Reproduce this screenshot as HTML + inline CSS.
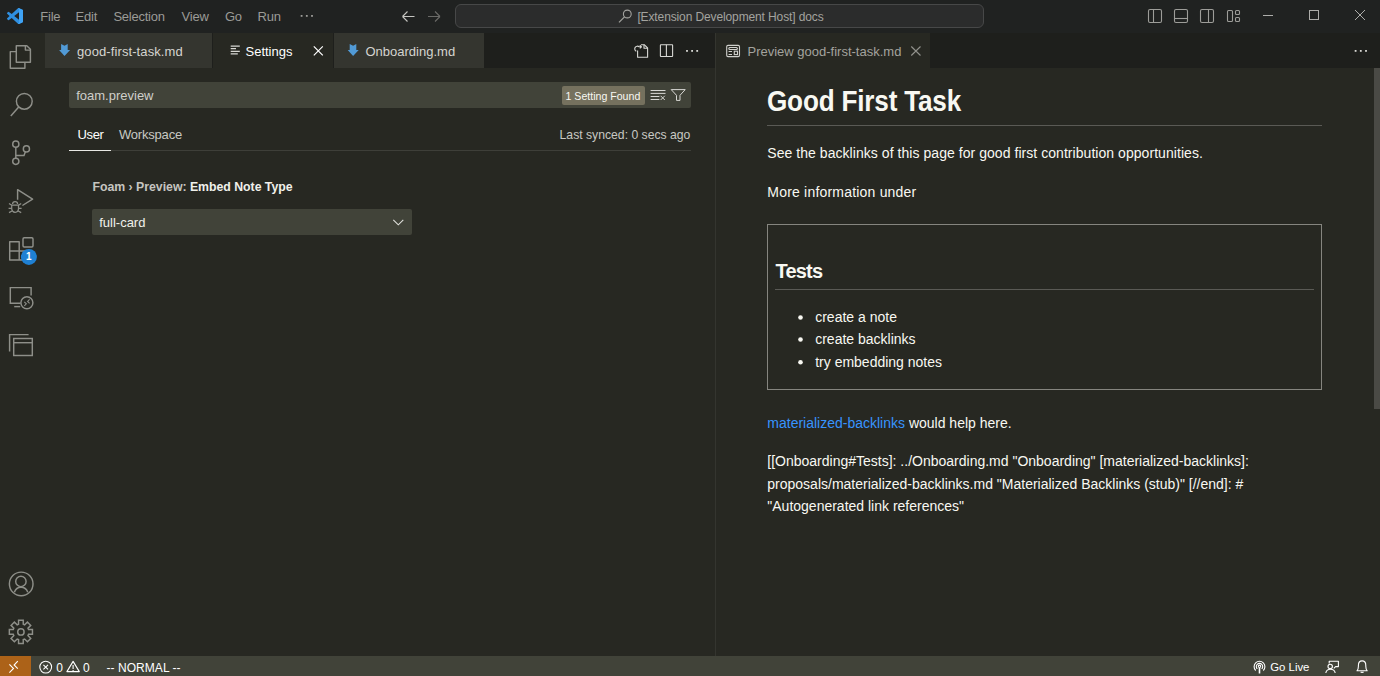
<!DOCTYPE html>
<html><head><meta charset="utf-8">
<style>
html,body{margin:0;padding:0;width:1380px;height:676px;overflow:hidden;background:#272822;}
body{position:relative;font-family:"Liberation Sans", sans-serif;}
.t{position:absolute;white-space:pre;line-height:1;}
.r{position:absolute;}
</style></head><body>
<div class="r" style="left:0px;top:0px;width:1380px;height:33px;background:#202221;"></div>
<div class="r" style="left:0px;top:33px;width:45px;height:623px;background:#272822;"></div>
<div class="r" style="left:45px;top:33px;width:670px;height:35px;background:#1e1f1c;"></div>
<div class="r" style="left:45px;top:68px;width:670px;height:588px;background:#272822;"></div>
<div class="r" style="left:715px;top:33px;width:1px;height:623px;background:#34352f;"></div>
<div class="r" style="left:716px;top:33px;width:664px;height:35px;background:#1e1f1c;"></div>
<div class="r" style="left:716px;top:68px;width:664px;height:588px;background:#272822;"></div>
<div class="r" style="left:0px;top:656px;width:1380px;height:20px;background:#414339;"></div>
<div class="r" style="left:0px;top:656px;width:31px;height:20px;background:#ac6218;"></div>
<div class="t" style="left:40.30px;top:10.00px;font-size:13px;color:#9b9b97;font-weight:400;letter-spacing:-0.25px;">File</div>
<div class="t" style="left:75.60px;top:10.00px;font-size:13px;color:#9b9b97;font-weight:400;letter-spacing:-0.25px;">Edit</div>
<div class="t" style="left:113.40px;top:10.00px;font-size:13px;color:#9b9b97;font-weight:400;letter-spacing:-0.25px;">Selection</div>
<div class="t" style="left:181.60px;top:10.00px;font-size:13px;color:#9b9b97;font-weight:400;letter-spacing:-0.25px;">View</div>
<div class="t" style="left:225.00px;top:10.00px;font-size:13px;color:#9b9b97;font-weight:400;letter-spacing:-0.25px;">Go</div>
<div class="t" style="left:257.60px;top:10.00px;font-size:13px;color:#9b9b97;font-weight:400;letter-spacing:-0.25px;">Run</div>
<div class="r" style="left:455px;top:4px;width:529px;height:24px;background:#2b2c2c;box-sizing:border-box;border:1px solid #474848;border-radius:6px;"></div>
<div class="t" style="left:637.40px;top:10.84px;font-size:12px;color:#a3a39f;font-weight:400;letter-spacing:-0.12px;">[Extension Development Host] docs</div>
<div class="r" style="left:45px;top:33px;width:167px;height:35px;background:#34352f;"></div>
<div class="r" style="left:213px;top:33px;width:120px;height:35px;background:#272822;"></div>
<div class="r" style="left:334px;top:33px;width:150px;height:35px;background:#34352f;"></div>
<div class="t" style="left:77.00px;top:45.30px;font-size:13px;color:#d4d4cf;font-weight:400;letter-spacing:0.1px;">good-first-task.md</div>
<div class="t" style="left:245.50px;top:45.30px;font-size:13px;color:#ffffff;font-weight:400;letter-spacing:0px;">Settings</div>
<div class="t" style="left:365.50px;top:45.30px;font-size:13px;color:#d4d4cf;font-weight:400;letter-spacing:0px;">Onboarding.md</div>
<div class="r" style="left:716px;top:33px;width:214px;height:35px;background:#272822;"></div>
<div class="t" style="left:747.50px;top:45.30px;font-size:13px;color:#a3a39e;font-weight:400;letter-spacing:0px;">Preview good-first-task.md</div>
<div class="r" style="left:69px;top:82px;width:622px;height:26px;background:#414339;border-radius:2px;"></div>
<div class="t" style="left:76.20px;top:88.80px;font-size:13px;color:#cfcfca;font-weight:400;letter-spacing:0px;">foam.preview</div>
<div class="r" style="left:562px;top:86px;width:83px;height:19px;background:#75715e;border-radius:2px;"></div>
<div class="t" style="left:565.50px;top:90.53px;font-size:10.6px;color:#f8f8f2;font-weight:400;letter-spacing:0px;">1 Setting Found</div>
<div class="t" style="left:77.60px;top:127.70px;font-size:13px;color:#ffffff;font-weight:400;letter-spacing:-0.4px;">User</div>
<div class="t" style="left:119.00px;top:127.70px;font-size:13px;color:#c8c8c3;font-weight:400;letter-spacing:-0.2px;">Workspace</div>
<div class="t" style="left:559.60px;top:128.87px;font-size:12.2px;color:#c8c8c3;font-weight:400;letter-spacing:0px;">Last synced: 0 secs ago</div>
<div class="r" style="left:69px;top:150px;width:622px;height:1px;background:#3e3f39;"></div>
<div class="r" style="left:69px;top:150px;width:42px;height:1px;background:#e8e8e4;"></div>
<div class="t" style="left:92.50px;top:181.39px;font-size:12.3px;color:#f0f0eb;font-weight:700;letter-spacing:-0.02px;"><span style="color:#c5c5c0">Foam › Preview: </span>Embed Note Type</div>
<div class="r" style="left:92px;top:209px;width:320px;height:26px;background:#414339;border-radius:2px;"></div>
<div class="t" style="left:99.20px;top:215.70px;font-size:13px;color:#f0f0eb;font-weight:400;letter-spacing:0px;">full-card</div>
<div class="t" style="left:767.00px;top:86.65px;font-size:29px;color:#f8f8f2;font-weight:700;letter-spacing:-0.2px;transform:scaleX(0.9);transform-origin:0 0;">Good First Task</div>
<div class="r" style="left:767px;top:125px;width:555px;height:1px;background:#5a5a55;"></div>
<div class="t" style="left:767.30px;top:146.45px;font-size:14px;color:#f8f8f2;font-weight:400;letter-spacing:0.05px;">See the backlinks of this page for good first contribution opportunities.</div>
<div class="t" style="left:767.30px;top:184.95px;font-size:14px;color:#f8f8f2;font-weight:400;letter-spacing:0.2px;">More information under</div>
<div class="r" style="left:767px;top:224px;width:555px;height:166px;background:transparent;box-sizing:border-box;border:1px solid #85857f;"></div>
<div class="t" style="left:775.50px;top:261.07px;font-size:20px;color:#f8f8f2;font-weight:700;letter-spacing:-0.8px;">Tests</div>
<div class="r" style="left:775px;top:289px;width:539px;height:1px;background:#5a5a55;"></div>
<div class="t" style="left:815.20px;top:309.95px;font-size:14px;color:#f8f8f2;font-weight:400;letter-spacing:0px;">create a note</div>
<div class="t" style="left:815.20px;top:331.95px;font-size:14px;color:#f8f8f2;font-weight:400;letter-spacing:0px;">create backlinks</div>
<div class="t" style="left:815.20px;top:354.65px;font-size:14px;color:#f8f8f2;font-weight:400;letter-spacing:0px;">try embedding notes</div>
<div class="t" style="left:767.30px;top:415.85px;font-size:14px;color:#f8f8f2;font-weight:400;letter-spacing:0px;"><span style="color:#3794ff">materialized-backlinks</span> would help here.</div>
<div class="t" style="left:767.30px;top:453.95px;font-size:14px;color:#f8f8f2;font-weight:400;letter-spacing:0px;">[[Onboarding#Tests]: ../Onboarding.md "Onboarding" [materialized-backlinks]:</div>
<div class="t" style="left:767.30px;top:476.85px;font-size:14px;color:#f8f8f2;font-weight:400;letter-spacing:0px;">proposals/materialized-backlinks.md "Materialized Backlinks (stub)" [//end]: #</div>
<div class="t" style="left:767.30px;top:499.05px;font-size:14px;color:#f8f8f2;font-weight:400;letter-spacing:0px;">"Autogenerated link references"</div>
<div class="r" style="left:1374px;top:68px;width:6px;height:341px;background:#4a4a45;"></div>
<div class="t" style="left:56.20px;top:661.84px;font-size:12px;color:#ffffff;font-weight:400;letter-spacing:0px;">0</div>
<div class="t" style="left:82.90px;top:661.84px;font-size:12px;color:#ffffff;font-weight:400;letter-spacing:0px;">0</div>
<div class="t" style="left:106.50px;top:661.64px;font-size:12px;color:#ffffff;font-weight:400;letter-spacing:0.05px;">-- NORMAL --</div>
<div class="t" style="left:1270.20px;top:662.15px;font-size:11.4px;color:#ffffff;font-weight:400;letter-spacing:0px;">Go Live</div>
<svg class="r" style="left:0;top:0" width="1380" height="676" viewBox="0 0 1380 676" fill="none">
<path fill="#2f8fe0" transform="translate(7 8) scale(0.16)" d="M96.46 10.8L75.86.87a6.23 6.23 0 0 0-7.1 1.2L29.33 38.05 12.15 25a4.16 4.16 0 0 0-5.32.24L1.33 30.25a4.17 4.17 0 0 0 0 6.16L16.23 50 1.33 63.59a4.17 4.17 0 0 0 0 6.16l5.5 5a4.16 4.16 0 0 0 5.32.24l17.18-13.04 39.43 35.96a6.22 6.22 0 0 0 7.1 1.2l20.6-9.92A6.25 6.25 0 0 0 100 83.6V16.4a6.25 6.25 0 0 0-3.54-5.6zM75.01 72.7L45.1 50l29.91-22.7z"/>
<path fill="#3fa3f5" transform="translate(7 8) scale(0.16)" d="M75.86.87a6.23 6.23 0 0 0-7.1 1.2L75.01 6V94l-6.25 4.7a6.22 6.22 0 0 0 7.1 1.2l20.6-9.92A6.25 6.25 0 0 0 100 83.6V16.4a6.25 6.25 0 0 0-3.54-5.6z"/>
<rect x="300.7" y="15" width="1.8" height="1.8" fill="#9b9b97"/>
<rect x="305.9" y="15" width="1.8" height="1.8" fill="#9b9b97"/>
<rect x="311.1" y="15" width="1.8" height="1.8" fill="#9b9b97"/>
<path d="M402.5 16.5H414.5M402.5 16.5L407.5 11.5M402.5 16.5L407.5 21.5" stroke="#c5c5c1" stroke-width="1.1"/>
<path d="M440 16.5H428M440 16.5L435 11.5M440 16.5L435 21.5" stroke="#6a6a67" stroke-width="1.1"/>
<circle cx="627.3" cy="14" r="3.9" stroke="#a3a39f" stroke-width="1.1"/><path d="M624.5 16.8L619 22.3" stroke="#a3a39f" stroke-width="1.2"/>
<rect x="1148.5" y="9.5" width="13" height="13" rx="1.5" stroke="#9d9d99" stroke-width="1.1"/><path d="M1153.5 9.5V22.5" stroke="#9d9d99" stroke-width="1.1"/>
<rect x="1174.5" y="9.5" width="13" height="13" rx="1.5" stroke="#9d9d99" stroke-width="1.1"/><path d="M1174.5 18.5H1187.5" stroke="#9d9d99" stroke-width="1.1"/>
<rect x="1200.5" y="9.5" width="13" height="13" rx="1.5" stroke="#9d9d99" stroke-width="1.1"/><path d="M1208.5 9.5V22.5" stroke="#9d9d99" stroke-width="1.1"/>
<rect x="1227.5" y="10.5" width="5" height="11" rx="1" stroke="#9d9d99" stroke-width="1.1"/><rect x="1235.5" y="10.5" width="4" height="4" rx="1" stroke="#9d9d99" stroke-width="1.1"/><rect x="1235.5" y="17.5" width="4" height="4" rx="1" stroke="#9d9d99" stroke-width="1.1"/>
<path d="M1263 15.5H1273" stroke="#adadaa" stroke-width="1"/>
<rect x="1309.5" y="10.5" width="9" height="9" stroke="#adadaa" stroke-width="1"/>
<path d="M1355 10L1365 20M1365 10L1355 20" stroke="#adadaa" stroke-width="1"/>
<g stroke="#8e8f89" stroke-width="1.45" stroke-linejoin="round"><path d="M16.3 45.7H26.8L30.4 49.3V62.2H16.3Z"/><path d="M25.4 45.7V50.1H30.4"/><path d="M16.3 51.6H10.3V68.2H24.9V62.2"/></g>
<g stroke="#8e8f89" stroke-width="1.45"><circle cx="24.3" cy="101.3" r="7.9"/><path d="M18.7 106.9L10.8 116"/></g>
<g stroke="#8e8f89" stroke-width="1.45"><circle cx="15.8" cy="144.2" r="3.1"/><circle cx="15.8" cy="161.3" r="3.1"/><circle cx="26.4" cy="148.9" r="3.1"/><path d="M15.8 147.3V158.2M15.8 155.5H24L25.4 151.8"/></g>
<g stroke="#8e8f89" stroke-width="1.45" stroke-linejoin="round"><path d="M17.6 199.8V189.6L32.6 199.1L22.4 205.5"/></g>
<g stroke="#8e8f89" stroke-width="1.25" stroke-linejoin="round"><path d="M12.6 204A2.5 2.3 0 0 1 17.6 204"/><path d="M11.7 205.2H18.5V208.6C18.5 210.8 17 212.3 15.1 212.3C13.2 212.3 11.7 210.8 11.7 208.6Z"/><path d="M9 203.4L11.7 205.2M21.2 203.4L18.5 205.2M8.6 208.4H11.7M21.6 208.4H18.5M9 212.6L12 211M21.2 212.6L18.2 211"/></g>
<g stroke="#8e8f89" stroke-width="1.45" stroke-linejoin="round"><path d="M9.7 241.7H19.2V260H9.7Z M9.7 251H25 V260H19.2"/><rect x="23" y="237.7" width="10" height="9.3" rx="1.2"/></g>
<circle cx="28.9" cy="256.9" r="8" fill="#1f80d3"/>
<g stroke="#8e8f89" stroke-width="1.45"><path d="M20.5 303.3H10.3V287.6H31.1V295.5"/><path d="M14.2 306.6H20.2"/><circle cx="26.9" cy="302.7" r="6"/><path d="M24.3 301.8L26.3 303.8L24.3 305.8M29.6 299.4L27.6 301.4L29.6 303.4" stroke-width="1.1"/></g>
<g stroke="#8e8f89" stroke-width="1.45"><path d="M9.6 351.5V334.6H28.6"/><rect x="13.7" y="338.5" width="18.6" height="17"/><path d="M13.7 342.7H32.3"/></g>
<g stroke="#8e8f89" stroke-width="1.45"><circle cx="21.2" cy="583.9" r="11.8"/><circle cx="20.9" cy="581.4" r="5.2"/><path d="M14.4 592.2C15.5 589 18 587.2 21 587.2C24 587.2 26.6 589 27.8 592.2"/></g>
<g stroke="#8e8f89" stroke-width="1.45" stroke-linejoin="miter"><path d="M28.54 629.54 L32.46 629.56 L32.46 634.24 L28.54 634.26 L27.98 635.63 L30.74 638.42 L27.42 641.74 L24.63 638.98 L23.26 639.54 L23.24 643.46 L18.56 643.46 L18.54 639.54 L17.17 638.98 L14.38 641.74 L11.06 638.42 L13.82 635.63 L13.26 634.26 L9.34 634.24 L9.34 629.56 L13.26 629.54 L13.82 628.17 L11.06 625.38 L14.38 622.06 L17.17 624.82 L18.54 624.26 L18.56 620.34 L23.24 620.34 L23.26 624.26 L24.63 624.82 L27.42 622.06 L30.74 625.38 L27.98 628.17Z"/><circle cx="20.9" cy="631.9" r="3.2"/></g>
<path fill="#519ad6" transform="translate(0.00 0)" d="M61.1 44.1L64.5 45.8L67.7 44.1V50H70.1L64.5 56.1L59.1 50H61.1Z"/>
<path d="M230.7 46.1H239.8M230.7 48.6H236M230.7 51.4H239.8M230.7 53.9H237.8" stroke="#d8d8d4" stroke-width="1.3"/>
<path d="M313.8 46.3L322.8 55.3M322.8 46.3L313.8 55.3" stroke="#ffffff" stroke-width="1.2"/>
<path fill="#519ad6" transform="translate(288.60 0)" d="M61.1 44.1L64.5 45.8L67.7 44.1V50H70.1L64.5 56.1L59.1 50H61.1Z"/>
<g stroke="#d8d8d4" stroke-width="1.1" stroke-linejoin="round"><path d="M641 44.7H644.2L647.6 48V57.3H637.6V50.5"/><path d="M644 44.7V48.2H647.6"/><path d="M636.3 51.3A2.7 2.7 0 1 1 639.2 46.8H641.5M639.8 45.2L641.5 46.8L639.8 48.4"/></g>
<g stroke="#d8d8d4" stroke-width="1.1"><rect x="660.4" y="44.7" width="12.2" height="11.8" rx="0.5"/><path d="M666.4 44.7V56.5"/></g>
<rect x="686.1" y="50" width="1.8" height="1.8" fill="#d8d8d4"/>
<rect x="691.2" y="50" width="1.8" height="1.8" fill="#d8d8d4"/>
<rect x="696.3" y="50" width="1.8" height="1.8" fill="#d8d8d4"/>
<g stroke="#d0d0cc" stroke-width="1.1"><rect x="726.7" y="45.4" width="12.8" height="11.2" rx="1.3"/><rect x="728.8" y="47.5" width="8.6" height="2" rx="1"/><path d="M728.6 51.5H732M728.6 54.5H732"/><rect x="734.3" y="51.2" width="3.2" height="3.4"/></g>
<path d="M911.3 46.5L920.5 55.5M920.5 46.5L911.3 55.5" stroke="#92928d" stroke-width="1.1"/>
<rect x="1354.7" y="50" width="1.8" height="1.8" fill="#d8d8d4"/>
<rect x="1359.9" y="50" width="1.8" height="1.8" fill="#d8d8d4"/>
<rect x="1365.1" y="50" width="1.8" height="1.8" fill="#d8d8d4"/>
<path d="M650.6 90.5H665.5M650.6 93.4H665.5M650.6 96.5H659.4M650.6 99.5H659.4M660.6 95.8L664.8 100M664.8 95.8L660.6 100" stroke="#d8d8d4" stroke-width="1"/>
<path d="M671.2 89.6H685.2L680 95.3V100.4H676.5V95.3Z" stroke="#d8d8d4" stroke-width="1" stroke-linejoin="round"/>
<path d="M393.3 219.8L398.3 224.8L403.3 219.8" stroke="#e0e0dc" stroke-width="1.1"/>
<circle cx="800.5" cy="317.5" r="2.3" fill="#f8f8f2"/>
<circle cx="800.5" cy="339.5" r="2.3" fill="#f8f8f2"/>
<circle cx="800.5" cy="362.2" r="2.3" fill="#f8f8f2"/>
<path d="M9.4 664.3L13.5 668.5L9.4 672.6M17.8 661.2L14.1 665L17.8 668.7" stroke="#ffffff" stroke-width="1.1"/>
<circle cx="45.7" cy="667.1" r="5.9" stroke="#ffffff" stroke-width="1.1"/><path d="M43.4 664.8L48 669.4M48 664.8L43.4 669.4" stroke="#ffffff" stroke-width="1.1"/>
<path d="M73.1 661.4L79.3 671.6H66.9Z" stroke="#ffffff" stroke-width="1.1" stroke-linejoin="round"/><path d="M73.1 665V669M73.1 670V671" stroke="#ffffff" stroke-width="1.1"/>
<g stroke="#ffffff" stroke-width="1.1"><circle cx="1259.5" cy="666.3" r="1.2"/><path d="M1257.3 668.9A3.2 3.2 0 1 1 1261.7 668.9M1255.7 670.5A5.4 5.4 0 1 1 1263.3 670.5"/><path d="M1259.5 667.8V673.5" stroke-width="1.6"/></g>
<g stroke="#ffffff" stroke-width="1.1" stroke-linejoin="round"><circle cx="1330.2" cy="666.4" r="2.2"/><path d="M1325.8 673C1326.3 670.6 1328.2 669.3 1330.5 669.3C1332.8 669.3 1334.7 670.6 1335.2 673"/><path d="M1329.2 663.6V661.2H1338.4V666.6H1335.6L1333.8 668.4"/></g>
<g stroke="#ffffff" stroke-width="1.1" stroke-linejoin="round"><path d="M1357 670.8H1367.2C1366 669.5 1365.8 668.3 1365.8 666.2V665.4C1365.8 662.8 1364.2 660.9 1362.1 660.9C1360 660.9 1358.4 662.8 1358.4 665.4V666.2C1358.4 668.3 1358.2 669.5 1357 670.8Z"/><path d="M1360.7 671.8C1361 672.6 1363.2 672.6 1363.5 671.8"/></g>
</svg>
<div class="t" style="left:26.00px;top:252.34px;font-size:10px;color:#ffffff;font-weight:700;letter-spacing:0px;">1</div>
</body></html>
